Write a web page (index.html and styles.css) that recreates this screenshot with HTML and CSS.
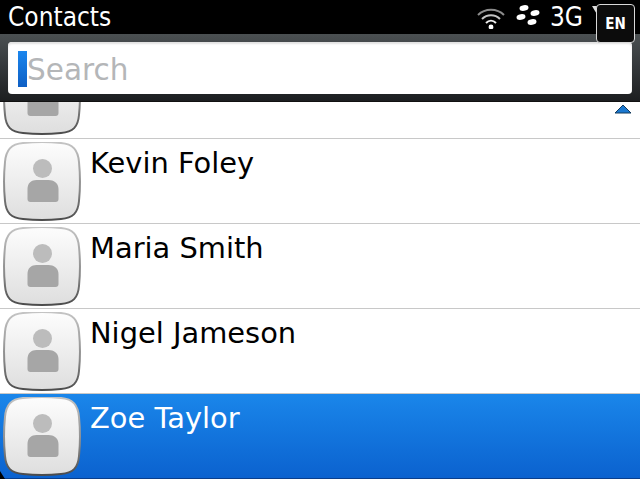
FILE: index.html
```html
<!DOCTYPE html>
<html lang="en">
<head>
  <meta charset="UTF-8">
  <title>Contacts</title>
  <link rel="stylesheet" href="styles.css">
</head>
<body>
  <svg class="defs" width="0" height="0">
    <defs>
      <linearGradient id="tile" x1="0" y1="0" x2="0" y2="1">
        <stop offset="0" stop-color="#fdfdfd"/>
        <stop offset="1" stop-color="#dedede"/>
      </linearGradient>
      <linearGradient id="edge" x1="0" y1="0" x2="0" y2="1">
        <stop offset="0" stop-color="#c4c4c4"/>
        <stop offset="0.6" stop-color="#8a8a8a"/>
        <stop offset="1" stop-color="#4c4c4c"/>
      </linearGradient>
      <symbol id="avatar" viewBox="0 0 78 79">
        <path d="M20 1C30 0 48 0 58 1C70 2 75 8 76 20C77 30 77 49 76 59C75 71 70 76 58 77C48 78 30 78 20 77C8 76 3 71 2 59C1 49 1 30 2 20C3 8 8 2 20 1Z" fill="url(#tile)" stroke="url(#edge)" stroke-width="2"/>
        <circle cx="39.5" cy="26.5" r="9.5" fill="#bcbcbc"/>
        <path d="M24.5 57V47C24.5 41 28.500 38 33.500 38H45.500C50.500 38 55.500 41 55.500 47V57C55.500 59 54.500 60 52.500 60H27.500C25.500 60 24.500 59 24.500 57Z" fill="#a6a6a6"/>
      </symbol>
    </defs>
  </svg>

  <div class="screen">
    <div class="status">
      <span class="title">Contacts</span>
      <div class="status-icons">
        <svg class="wifi" width="30" height="24" viewBox="0 0 30 24">
          <path d="M2 10C9 3 21 3 28 10" fill="none" stroke="#8c8c8c" stroke-width="2"/>
          <path d="M6 14C11 9 19 9 24 14" fill="none" stroke="#c4c4c4" stroke-width="2"/>
          <path d="M10 18C13 15 17 15 20 18" fill="none" stroke="#eee" stroke-width="2"/>
          <circle cx="15" cy="22" r="2.4" fill="#fff"/>
        </svg>
        <svg class="bb" width="24" height="20" viewBox="0 0 24 20">
          <g fill="#fff">
            <ellipse cx="8" cy="3" rx="4.500" ry="2.800" transform="rotate(-8 8 3)"/>
            <ellipse cx="19" cy="8" rx="4.500" ry="2.800" transform="rotate(-8 19 8)"/>
            <ellipse cx="5" cy="12" rx="4.500" ry="2.800" transform="rotate(-8 5 12)"/>
            <ellipse cx="16" cy="17" rx="4.500" ry="2.800" transform="rotate(-8 16 17)"/>
          </g>
        </svg>
        <span class="net">3G</span>
      </div>
    </div>

    <div class="search-band">
      <div class="search-box">
        <span class="caret"></span>
        <span class="placeholder">Search</span>
      </div>
    </div>

    <ul class="list">
      <li class="row row-cut">
        <svg class="avatar"><use href="#avatar"/></svg>
      </li>
      <li class="row">
        <svg class="avatar"><use href="#avatar"/></svg>
        <span class="name">Kevin Foley</span>
      </li>
      <li class="row">
        <svg class="avatar"><use href="#avatar"/></svg>
        <span class="name">Maria Smith</span>
      </li>
      <li class="row">
        <svg class="avatar"><use href="#avatar"/></svg>
        <span class="name">Nigel Jameson</span>
      </li>
      <li class="row row-selected">
        <svg class="avatar"><use href="#avatar"/></svg>
        <span class="name">Zoe Taylor</span>
      </li>
    </ul>

    <svg class="scroll-up" width="18" height="10" viewBox="0 0 18 10">
      <path d="M9 1L17 9H1Z" fill="#1a78d0" stroke="#123a5c" stroke-width="1"/>
    </svg>
    <svg class="signal-tip" width="12" height="10" viewBox="0 0 12 10">
      <path d="M0 0H12L6 10Z" fill="#ddd"/>
    </svg>
    <div class="lang">EN</div>
    <div class="corner"></div>
  </div>
</body>
</html>
```

FILE: styles.css
```css
html, body {
  margin: 0;
  padding: 0;
}
body {
  background: #000;
  font-family: "DejaVu Sans", sans-serif;
}
.defs {
  position: absolute;
}
.screen {
  position: relative;
  width: 640px;
  height: 480px;
  overflow: hidden;
  display: flex;
  flex-direction: column;
  background: #fff;
}
.status {
  height: 34px;
  flex: none;
  background: #000;
  color: #fff;
  display: flex;
  align-items: center;
  justify-content: space-between;
  padding: 0 57px 0 8px;
}
.title {
  font-family: "DejaVu Sans Condensed", "DejaVu Sans", sans-serif;
  font-size: 26px;
}
.status-icons {
  display: flex;
  align-items: center;
  gap: 10px;
}
.bb {
  margin-bottom: 4px;
}
.net {
  font-family: "DejaVu Sans Condensed", "DejaVu Sans", sans-serif;
  font-size: 26px;
}
.search-band {
  height: 68px;
  flex: none;
  box-sizing: border-box;
  padding: 8px 8px 7px;
  background: linear-gradient(#4b5052, #33373a 50%, #1c1e20);
  border-bottom: 1px solid #111;
}
.search-box {
  height: 52px;
  background: #fff;
  border-radius: 4px;
  box-shadow: inset 0 2px 2px #e2e2e2;
  display: flex;
  align-items: center;
  padding-left: 10px;
}
.caret {
  width: 9px;
  height: 36px;
  background: linear-gradient(#1a86ee, #0f5fc4);
  margin-top: 2px;
}
.placeholder {
  font-size: 29.5px;
  color: #b4b6b8;
  margin-top: 4px;
}
.list {
  list-style: none;
  margin: 0;
  padding: 0;
  flex: 1;
}
.row {
  height: 84px;
  border-bottom: 1px solid #c8c8c8;
  display: flex;
  align-items: flex-start;
  padding-left: 3px;
  color: #000;
}
.row-cut {
  height: 36px;
  overflow: hidden;
  align-items: flex-end;
}
.row-cut .avatar {
  margin: 0 0 3px;
}
.row-selected {
  border-bottom: 1px solid #0a3f8c;
  color: #fff;
  background: linear-gradient(#1a86ea, #0b62cf);
}
.avatar {
  width: 78px;
  height: 79px;
  flex: none;
  margin-top: 3px;
}
.name {
  font-size: 28.9px;
  margin: 7px 0 0 9px;
}
.scroll-up {
  position: absolute;
  left: 614px;
  top: 104px;
}
.signal-tip {
  position: absolute;
  left: 592px;
  top: 6px;
}
.lang {
  position: absolute;
  left: 596px;
  top: 4px;
  width: 39px;
  height: 39px;
  box-sizing: border-box;
  background: #0c0c0c;
  border: 1px solid #d8d8d8;
  border-radius: 4px;
  color: #fff;
  font-family: "DejaVu Sans Condensed", "DejaVu Sans", sans-serif;
  font-size: 15px;
  font-weight: bold;
  display: flex;
  align-items: center;
  justify-content: center;
}
.corner {
  position: absolute;
  left: 0;
  bottom: 1px;
  width: 0;
  height: 0;
  border-left: 5px solid #000;
  border-top: 8px solid transparent;
}
```
